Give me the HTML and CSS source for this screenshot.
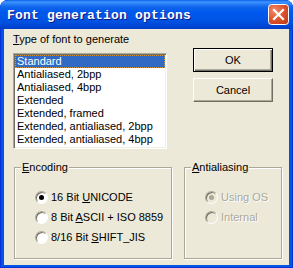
FILE: index.html
```html
<!DOCTYPE html>
<html lang="en">
<head>
<meta charset="UTF-8">
<title>Font generation options</title>
<link rel="stylesheet" href="styles.css">
</head>
<body>

<div class="window">
    <div class="titlebar">
        <span class="title">Font generation options</span>
        <a href="javascript:;" class="close-btn">
            <svg width="21" height="21" viewBox="0 0 21 21">
                <defs>
                    <radialGradient id="closeFill" cx="30%" cy="30%" r="80%">
                        <stop offset="0" stop-color="#F08C6C"/>
                        <stop offset="0.55" stop-color="#E0552F"/>
                        <stop offset="1" stop-color="#C2401C"/>
                    </radialGradient>
                </defs>
                <rect x="0.5" y="0.5" width="20" height="20" rx="3" fill="url(#closeFill)" stroke="#fff"/>
                <path d="M6 6 L15 15 M15 6 L6 15" stroke="#fff" stroke-width="2.2" stroke-linecap="square"/>
            </svg>
        </a>
    </div>
    <div class="client">
        <div class="top">
            <div class="font-type">
                <div class="label"><u>T</u>ype of font to generate</div>
                <ul class="listbox">
                    <li class="selected">Standard</li>
                    <li>Antialiased, 2bpp</li>
                    <li>Antialiased, 4bpp</li>
                    <li>Extended</li>
                    <li>Extended, framed</li>
                    <li>Extended, antialiased, 2bpp</li>
                    <li>Extended, antialiased, 4bpp</li>
                </ul>
            </div>
            <div class="actions">
                <a href="javascript:;" class="btn default-btn">OK</a>
                <a href="javascript:;" class="btn">Cancel</a>
            </div>
        </div>
        <div class="groups">
            <fieldset class="group encoding">
                <legend><u>E</u>ncoding</legend>
                <label class="radio"><span class="circle checked"></span><span>16 Bit <u>U</u>NICODE</span></label>
                <label class="radio"><span class="circle"></span><span>8 Bit <u>A</u>SCII + ISO 8859</span></label>
                <label class="radio"><span class="circle"></span><span>8/16 Bit <u>S</u>HIFT_JIS</span></label>
            </fieldset>
            <fieldset class="group antialiasing disabled">
                <legend><u>A</u>ntialiasing</legend>
                <label class="radio"><span class="circle checked"></span><span>Using OS</span></label>
                <label class="radio"><span class="circle"></span><span>Internal</span></label>
            </fieldset>
        </div>
    </div>
</div>

</body>
</html>
```

FILE: styles.css
```css
html,body,div,ul,li,fieldset,legend{
    margin:0;
    padding:0;
}
ul,li{list-style: none;}
body{
    background: #fff;
    font-family: "Liberation Sans", Arial, sans-serif;
    font-size: 11px;
    color: #000;
}
a{
    color: inherit;
    text-decoration: none;
}
u{
    text-decoration-thickness: 1px;
    text-underline-offset: 1px;
}

/* window frame */
.window{
    width: 293px;
    height: 268px;
    display: flex;
    flex-direction: column;
    border-radius: 8px 8px 0 0;
    overflow: hidden;
    background: #0055E5;
    box-shadow: inset 0 0 0 1px #0831D9;
}
.titlebar{
    height: 29px;
    flex: none;
    display: flex;
    align-items: center;
    padding: 0 4px 0 7px;
    background: linear-gradient(#0A5FE8 0, #3D95FF 2px, #2A7EF8 4px, #0E65EA 7px, #0058EE 12px, #0055E5 20px, #0049D8 25px, #003DC6 29px);
}
.title{
    flex: 1;
    padding-top: 1px;
    font-family: "Liberation Mono", "Courier New", monospace;
    font-weight: bold;
    font-size: 13px;
    line-height: 15px;
    letter-spacing: 0.2px;
    color: #fff;
    text-shadow: 1px 1px 0 #0A1883;
    white-space: nowrap;
}
.close-btn{
    width: 21px;
    height: 21px;
}
.close-btn svg{
    display: block;
}
.client{
    flex: 1;
    margin: 0 4px 3px 4px;
    padding: 4px 0 0 9px;
    background: #ECE9D8;
}

/* top part */
.top{
    display: flex;
}
.font-type{
    width: 154px;
}
.label{
    height: 13px;
    line-height: 13px;
    margin-bottom: 7px;
    white-space: nowrap;
}
.listbox{
    box-sizing: border-box;
    height: 96px;
    padding: 1px;
    background: #fff;
    border: 1px solid;
    border-color: #ACA899 #fff #fff #ACA899;
    box-shadow: inset 1px 1px 0 #716F64, inset -1px -1px 0 #F1EFE2;
}
.listbox li{
    height: 13px;
    line-height: 13px;
    padding-left: 2px;
    white-space: nowrap;
}
.listbox li.selected{
    background: #316AC5;
    color: #fff;
    outline: 1px dotted #CE953A;
    outline-offset: -1px;
}
.actions{
    display: flex;
    flex-direction: column;
    gap: 6px;
    margin-left: 26px;
    padding-top: 15px;
}
.btn{
    box-sizing: border-box;
    display: flex;
    align-items: center;
    justify-content: center;
    width: 80px;
    height: 24px;
    background: #ECE9D8;
    border: 1px solid;
    border-color: #fff #716F64 #716F64 #fff;
    box-shadow: inset -1px -1px 0 #ACA899;
}
.default-btn{
    border-color: #000;
    box-shadow: inset 1px 1px 0 #fff, inset -1px -1px 0 #716F64, inset -2px -2px 0 #ACA899;
}

/* option groups */
.groups{
    display: flex;
    gap: 12px;
    height: 98px;
    margin: 12px 0 0 1px;
}
.group{
    box-sizing: border-box;
    padding: 13px 0 0 6px;
    border: 1px solid #ACA899;
    box-shadow: inset 1px 1px 0 #fff, 1px 1px 0 #fff;
}
.encoding{
    width: 158px;
}
.antialiasing{
    width: 98px;
}
.group legend{
    padding: 0 1px;
    line-height: 13px;
    background: #ECE9D8;
}
.radio{
    display: flex;
    align-items: center;
    gap: 3px;
    height: 20px;
    margin-left: 14px;
    white-space: nowrap;
}
.circle{
    box-sizing: border-box;
    position: relative;
    flex: none;
    width: 13px;
    height: 13px;
    border-radius: 50%;
    border: 1px solid;
    border-color: #ACA899 #fff #fff #ACA899;
    background: #fff;
    box-shadow: inset 1px 1px 0 #716F64;
}
.circle.checked::after{
    content: '';
    position: absolute;
    left: 3px;
    top: 3px;
    width: 5px;
    height: 5px;
    border-radius: 50%;
    background: #000;
}
.disabled .radio{
    color: #ACA899;
    text-shadow: 1px 1px 0 #fff;
}
.disabled .circle{
    background: #ECE9D8;
}
.disabled .circle.checked::after{
    background: #ACA899;
}
```
